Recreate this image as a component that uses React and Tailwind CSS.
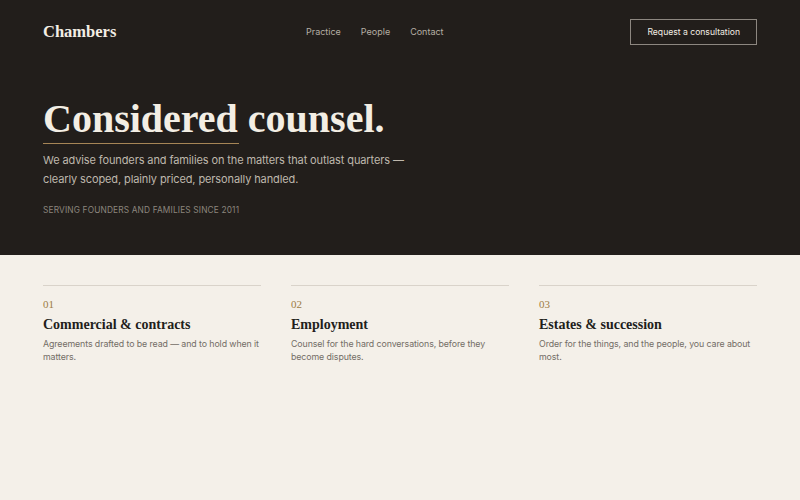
const practices = [
  { num: '01', title: 'Commercial & contracts', body: 'Agreements drafted to be read — and to hold when it matters.' },
  { num: '02', title: 'Employment', body: 'Counsel for the hard conversations, before they become disputes.' },
  { num: '03', title: 'Estates & succession', body: 'Order for the things, and the people, you care about most.' },
]

const serif = "font-['Liberation_Serif','DejaVu_Serif',serif]"

export default function App() {
  return (
    <div className="min-h-[500px] bg-[#f4f0e9] font-['Inter','Liberation_Sans',sans-serif]">
      <header className="h-[255px] bg-[#221e1b] px-[43px]">
        <nav className="flex h-[63px] items-center">
          <a className={`${serif} mt-[2px] w-[263px] text-[16.5px] font-bold text-[#f3eee5]`}>Chambers</a>
          <div className="flex items-center gap-[20px] text-[9px] text-[#b5aea4]">
            <a>Practice</a>
            <a>People</a>
            <a>Contact</a>
          </div>
          <a className="ml-auto border border-[#8d8780] px-[16px] py-[5px] text-[8.6px] leading-[14px] text-[#f3eee5]">
            Request a consultation
          </a>
        </nav>

        <section className="pt-[34px]">
          <h1 className={`${serif} text-[40px] leading-[44px] font-bold text-[#f3eee4]`}>Considered counsel.</h1>
          <div className="mt-[2px] h-px w-[196px] bg-[#a68556]" />
          <p className="mt-[7px] max-w-[380px] text-[11px] leading-[19px] tracking-[-0.01em] text-[#bfb8ad]">
            We advise founders and families on the matters that outlast quarters — clearly scoped, plainly priced,
            personally handled.
          </p>
          <p className="mt-[15px] text-[8.3px] leading-[12px] tracking-[0.02em] text-[#8c867e]">
            SERVING FOUNDERS AND FAMILIES SINCE 2011
          </p>
        </section>
      </header>

      <section className="grid grid-cols-3 gap-[30px] px-[43px] pt-[30px]">
        {practices.map((p) => (
          <div key={p.num} className="border-t border-[#d9d3ca] pt-[11px]">
            <div className={`${serif} text-[11px] leading-[14px] text-[#9c7c45]`}>{p.num}</div>
            <h2 className={`${serif} mt-[5px] text-[14px] leading-[18px] font-bold text-[#221e1b]`}>{p.title}</h2>
            <p className="mt-[3px] text-[8.8px] leading-[13px] tracking-[-0.01em] text-[#736d66]">{p.body}</p>
          </div>
        ))}
      </section>
    </div>
  )
}
